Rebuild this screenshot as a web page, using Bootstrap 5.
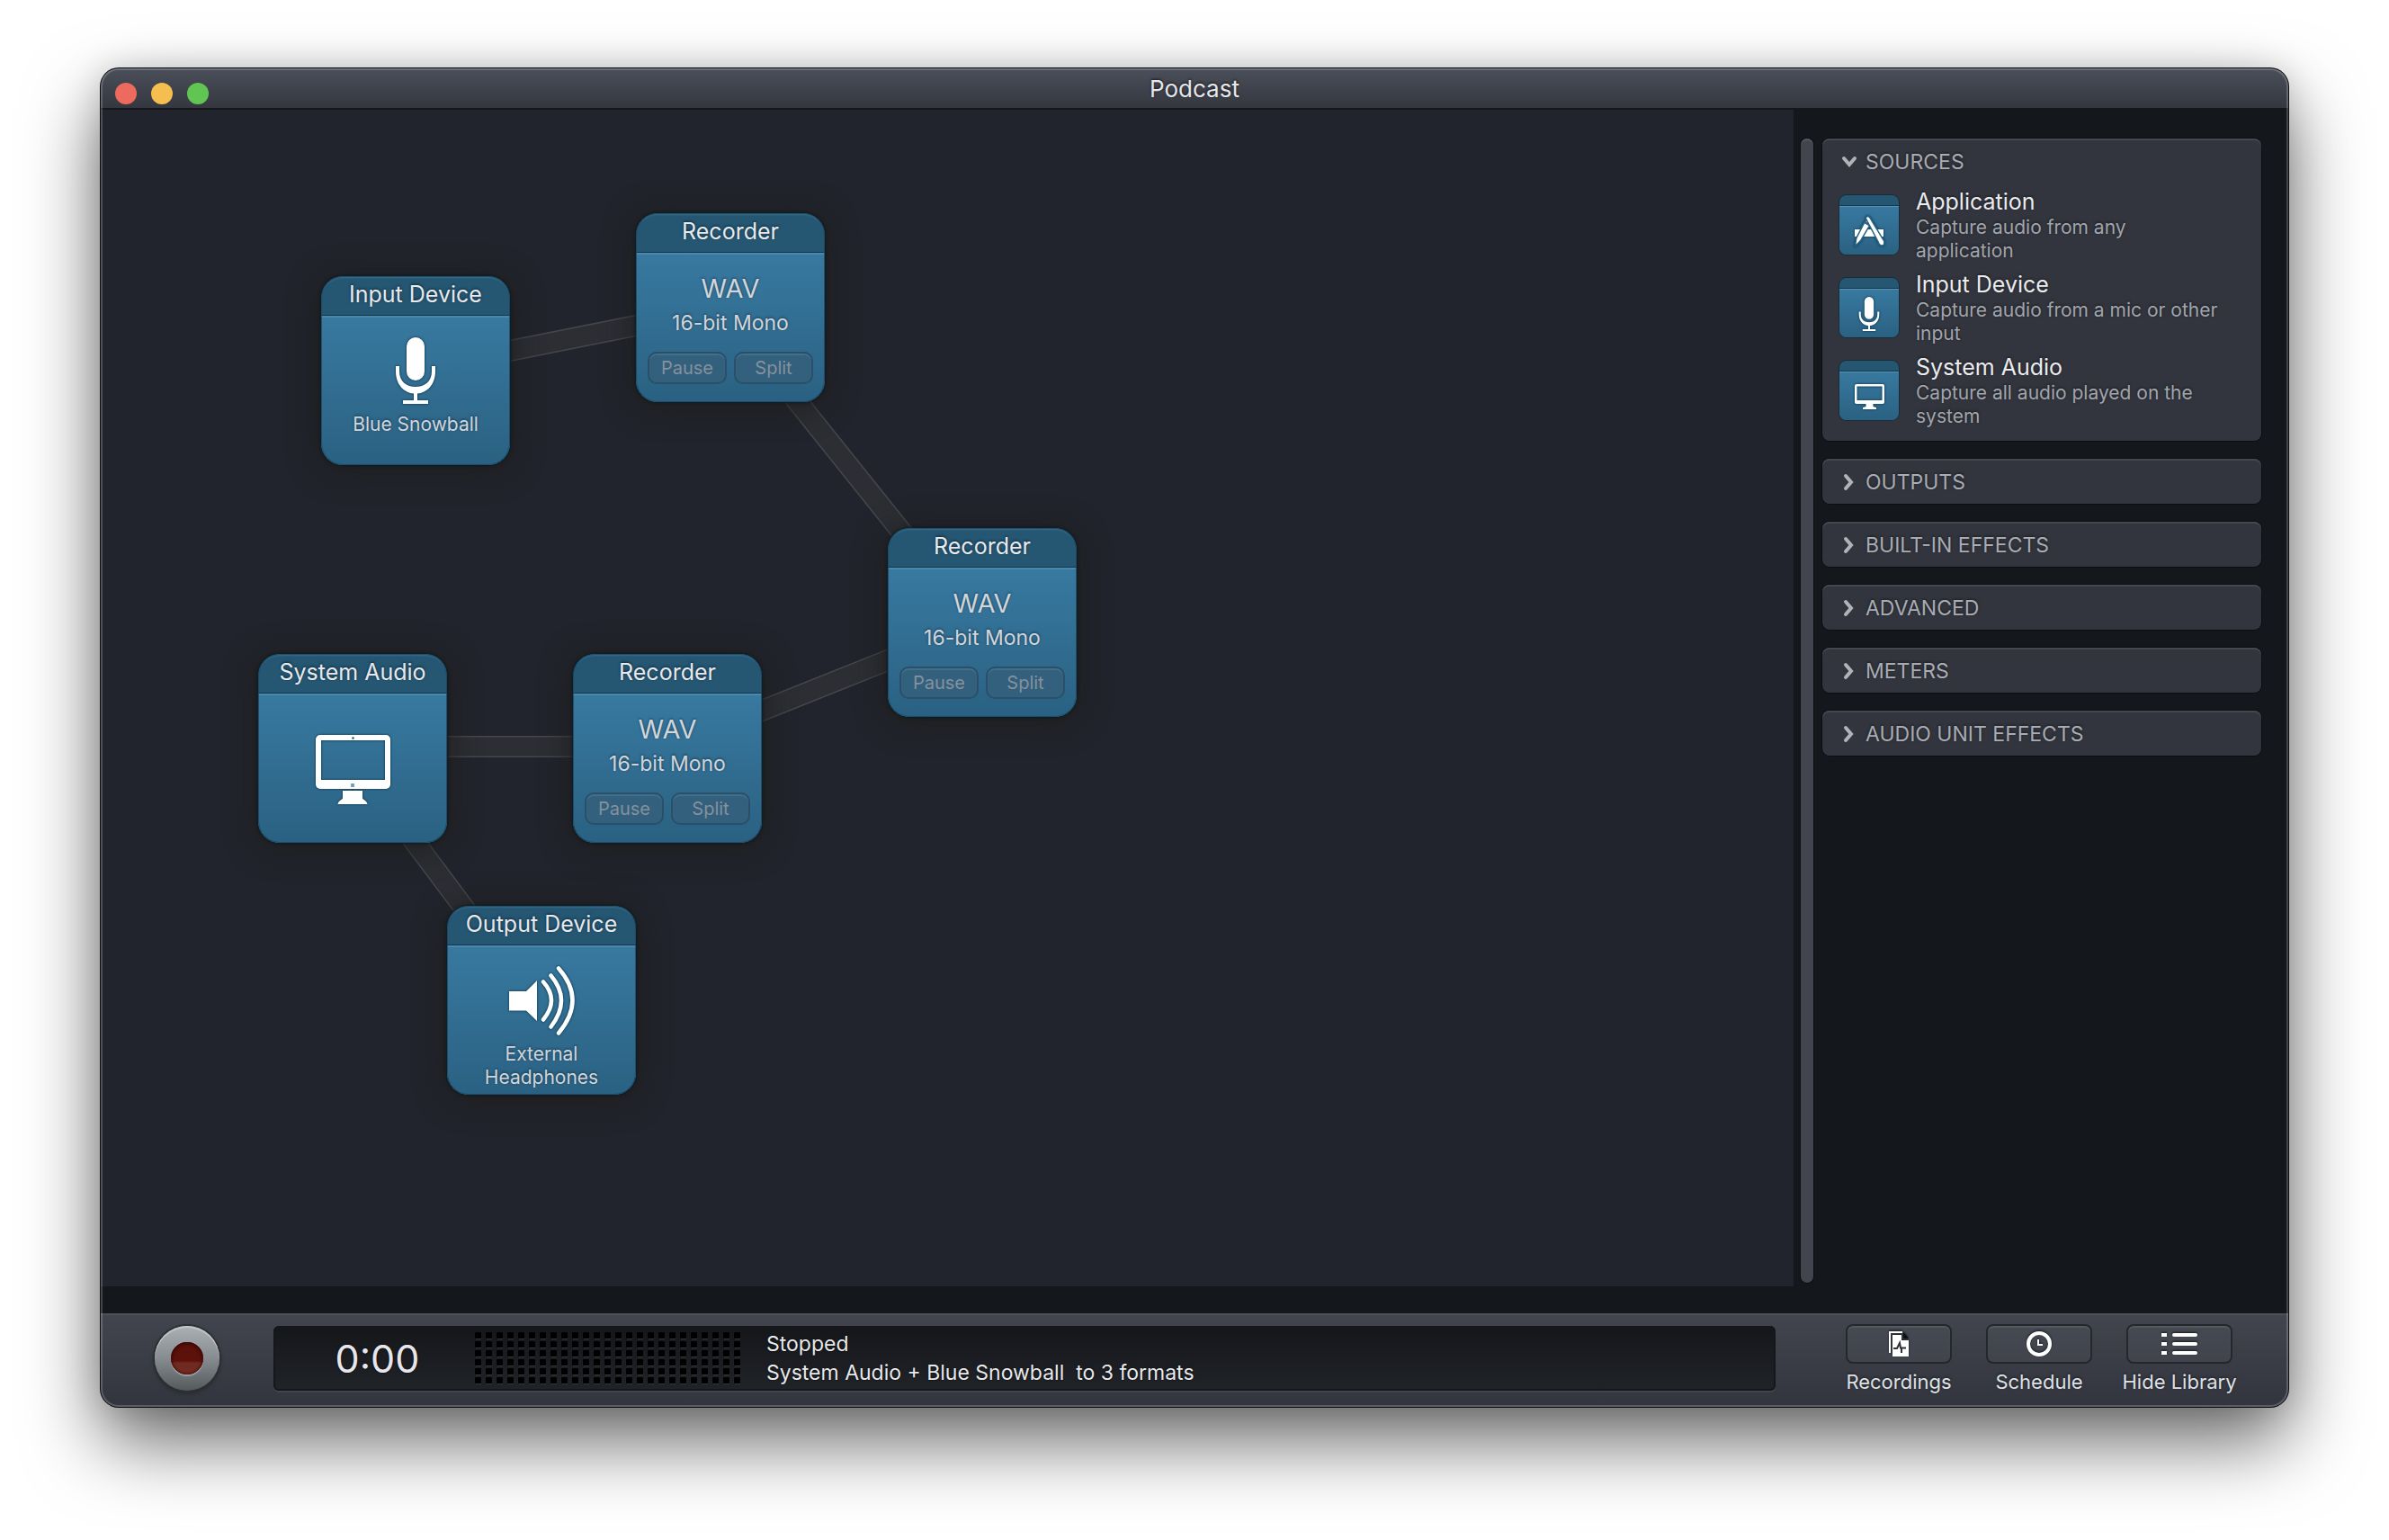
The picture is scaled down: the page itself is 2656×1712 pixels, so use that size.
<!DOCTYPE html>
<html lang="en">
<head>
<meta charset="utf-8">
<meta name="viewport" content="width=device-width, initial-scale=1">
<title>Podcast</title>
<link href="https://cdn.jsdelivr.net/npm/bootstrap@5.3.0/dist/css/bootstrap.min.css" rel="stylesheet">
<style>
  body { background: #fff; font-family: Inter, "Liberation Sans", sans-serif; padding: 76px 112px 148px; color: #e6e7ea; }
  h1, h2, h3, p { margin: 0; font-weight: 400; }
  svg { display: block; flex: none; }

  .app-window { border-radius: 20px; overflow: hidden; background: #14171b; position: relative;
    box-shadow: 0 0 0 1px #0b0d0f, 0 38px 84px rgba(0,0,0,.6), 0 0 36px rgba(0,0,0,.14); }
  .app-window::after { content: ""; position: absolute; inset: 0; border-radius: 20px; pointer-events: none;
    box-shadow: inset 0 0 0 2px rgba(255,255,255,.2); }

  .titlebar { height: 46px; background: linear-gradient(#4b4f59, #343740); border-bottom: 2px solid #15171b; position: relative; }
  .titlebar h1 { font-size: 26px; line-height: 46px; text-shadow: 0 -1px 3px rgba(0,0,0,.7); }
  .lights { position: absolute; left: 16px; top: 16px; gap: 16px; }
  .light-dot { width: 24px; height: 24px; border: 0; padding: 0; border-radius: 50%; }
  .dot-close { background: #ed6a5e; } .dot-min { background: #f5bf4f; } .dot-zoom { background: #61c554; }

  .board { background: #21242c; position: relative; margin-bottom: 30px; overflow: hidden; }
  .wires { position: absolute; left: 0; top: 0; width: 100%; height: 100%; }
  .wire-edge { stroke: #45474b; stroke-width: 24; }
  .wire-core { stroke: #2c2e34; stroke-width: 21; }

  .node { position: absolute; width: 210px; height: 210px; border-radius: 24px; overflow: hidden;
    background: #255773; text-align: center; box-shadow: 0 0 3px 1px #14181c, 0 4px 30px 6px rgba(30,30,28,.75); }
  .node::after { content: ""; position: absolute; inset: 0; border-radius: 24px; pointer-events: none;
    box-shadow: inset 0 0 0 1px rgba(15,70,100,.7), inset 0 3px 2px -1px rgba(90,150,185,.35); }
  .node-title { height: 44px; line-height: 41px; font-size: 25px; color: #e8e9ec; border-bottom: 1px solid #163649; text-shadow: 0 -1px 3px rgba(0,20,35,.7); }
  .node-main { height: 166px; background: linear-gradient(#3879a0, #2a6182); border-top: 2px solid #4a87ad; color: #d2d5d9; text-shadow: 0 -1px 3px rgba(0,30,50,.6); }
  .node-art { height: 86px; margin-bottom: 4px; }
  .node-text { font-size: 21px; line-height: 26px; }
  .node-depth { font-size: 23px; line-height: 24px; margin-bottom: 2px; }
  .node-format { font-size: 29px; line-height: 36px; }
  .node-btn { width: 88px; height: 36px; border: 2px solid #2a4f68; border-radius: 10px; padding: 0; font-size: 20px; line-height: 30px;
    color: #85919d; background: #32607d; box-shadow: inset 0 2px 1px rgba(110,150,175,.3); text-shadow: none; }
  .glyph { filter: drop-shadow(0 0 1px #17465f) drop-shadow(0 0 1px #1d506b); fill: #fff; overflow: visible; }
  #node-input { left: 245px; top: 185px; }
  #node-rec-a { left: 595px; top: 115px; }
  #node-rec-b { left: 875px; top: 465px; }
  #node-system { left: 175px; top: 605px; }
  #node-rec-c { left: 525px; top: 605px; }
  #node-output { left: 385px; top: 885px; }

  .library { width: 550px; flex: none; padding: 32px 30px 34px 8px; gap: 10px; }
  .lib-scroll { width: 14px; flex: none; border-radius: 7px; background: #42454e; box-shadow: 0 0 0 1px #0d0f12, inset 0 3px 2px -1px #565a60; }
  .lib-list { gap: 20px; }
  .lib-group { background: #32353d; border-radius: 8px; box-shadow: 0 0 0 1px #0c0e11, inset 0 2px 0 #45484c; }
  .lib-head { height: 50px; width: 100%; border: 0; background: none; padding: 2px 22px 0; gap: 10px; font-size: 23px; color: #a9acb4; text-shadow: 0 -1px 3px rgba(0,0,0,.5); }
  .chevron { width: 16px; height: 18px; fill: none; stroke: #b0b3ba; stroke-width: 4; stroke-linecap: round; overflow: visible; }
  .lib-items { padding: 4px 40px 14px 19px; gap: 8px; }
  .lib-item { gap: 19px; }
  .tile { width: 66px; height: 66px; margin-top: 9px; flex: none; border-radius: 8px; overflow: hidden; background: #255773; padding-top: 12px; box-shadow: 0 0 0 1px #1a2b37; }
  .tile-main { height: 54px; background: linear-gradient(#3879a0, #2a6182); border-top: 1px solid #5592b6; box-shadow: 0 -1px 0 #163649; }
  .lib-name { font-size: 25px; line-height: 32px; color: #ebecef; text-shadow: 0 -1px 3px rgba(0,0,0,.5); }
  .lib-desc { font-size: 21px; line-height: 26px; color: #a2a5ad; text-shadow: 0 -1px 3px rgba(0,0,0,.5); }

  .transport { height: 104px; background: linear-gradient(#42454e, #32353e); border-top: 2px solid #4d515b; padding: 10px 43px 0 60px; }
  .rec-btn { width: 72px; height: 72px; margin-top: 2px; flex: none; border: 0; border-radius: 50%; background: linear-gradient(#abb0b4, #878c90 50%, #54595c); box-shadow: 0 0 0 2px #2c3035, 0 2px 4px 1px #24272c, inset 0 2px 1px #c4c8ca; }
  .rec-core { width: 36px; height: 36px; border-radius: 50%; background: linear-gradient(#5c110b 58%, #6f2a20 64%, #722b20); box-shadow: inset 0 2px 4px #3a0704, inset 0 0 3px #3a0704, 0 2px 1px rgba(200,205,208,.5); }
  .lcd { height: 72px; margin: 2px 59px 0 60px; border-radius: 6px; background: linear-gradient(#15161a, #202328); box-shadow: inset 0 0 0 2px #15181b, 0 2px 0 #42454d; text-shadow: 0 0 2px #000; }
  .lcd-time { font-size: 43px; line-height: 72px; width: 223px; padding-left: 8px; text-align: center; color: #e6e6ec; }
  .lcd-meter { margin-right: 23px; }
  .lcd-text { font-size: 23px; line-height: 32px; color: #e8e9ec; white-space: pre; }
  .tool { width: 156px; }
  .tool-btn { width: 118px; height: 44px; border: 2px solid #24272c; border-radius: 8px; background: linear-gradient(#454952, #41444d); padding: 0; box-shadow: inset 0 2px 1px #555a60; }
  .tool-label { font-size: 22px; line-height: 26px; margin-top: 7px; color: #dfe1e5; white-space: nowrap; text-shadow: 0 -1px 3px rgba(0,0,0,.5); cursor: pointer; }
  .tool-icon { fill: #fff; filter: drop-shadow(0 -1px 1px #16181c); overflow: visible; }
</style>
<script src="https://cdn.jsdelivr.net/npm/bootstrap@5.3.0/dist/js/bootstrap.bundle.min.js"></script>
</head>
<body class="d-flex flex-column min-vh-100">

<svg width="0" height="0" class="position-absolute" aria-hidden="true">
  <symbol id="g-mic" viewBox="0 0 44 74">
    <rect x="12" y="0" width="20" height="48" rx="10"/>
    <path d="M0 32h4v6c0 11 8 17 18 17s18-6 18-17v-6h4v6c0 15-10 24-20 24.500V70h12v4H8v-4h12v-7.500C10 62 0 53 0 38z"/>
  </symbol>
  <symbol id="g-mac" viewBox="0 0 83 77">
    <path fill-rule="evenodd" d="M5 0h73a5 5 0 0 1 5 5v50a5 5 0 0 1-5 5H5a5 5 0 0 1-5-5V5a5 5 0 0 1 5-5zM6 6v44h71V6z"/>
    <path d="M30 62h22v8c0 2 5 3 5.500 7h-33c.5-4 5.500-5 5.500-7z"/>
    <circle cx="41.500" cy="3.500" r="1.200" fill="#1d506b"/>
    <rect x="39" y="54" width="4" height="4" fill="#7ba3b8"/>
  </symbol>
</svg>

<div class="app-window d-flex flex-column flex-grow-1">
  <header class="titlebar">
    <div class="lights d-flex">
      <button class="light-dot dot-close" aria-label="Close"></button>
      <button class="light-dot dot-min" aria-label="Minimize"></button>
      <button class="light-dot dot-zoom" aria-label="Zoom"></button>
    </div>
    <h1 class="text-center">Podcast</h1>
  </header>

  <div class="d-flex flex-grow-1">
    <main class="board flex-grow-1">
      <svg class="wires" aria-hidden="true">
        <g class="wire-edge"><path d="M350 289L700 219M691 220L971 570M630 710L980 570M280 708H630M271 710L481 990"/></g>
        <g class="wire-core"><path d="M350 289L700 219M691 220L971 570M630 710L980 570M280 708H630M271 710L481 990"/></g>
      </svg>

      <section class="node" id="node-input">
        <h2 class="node-title">Input Device</h2>
        <div class="node-main pt-3">
          <div class="node-art d-flex align-items-center justify-content-center"><svg class="glyph" width="44" height="74"><use href="#g-mic"/></svg></div>
          <p class="node-text">Blue Snowball</p>
        </div>
      </section>

      <section class="node" id="node-rec-a">
        <h2 class="node-title">Recorder</h2>
        <div class="node-main">
          <p class="node-format mt-3 pt-1">WAV</p>
          <p class="node-depth mt-2">16-bit Mono</p>
          <div class="d-flex justify-content-center gap-2 mt-3 pt-1"><button class="node-btn">Pause</button><button class="node-btn">Split</button></div>
        </div>
      </section>

      <section class="node" id="node-rec-b">
        <h2 class="node-title">Recorder</h2>
        <div class="node-main">
          <p class="node-format mt-3 pt-1">WAV</p>
          <p class="node-depth mt-2">16-bit Mono</p>
          <div class="d-flex justify-content-center gap-2 mt-3 pt-1"><button class="node-btn">Pause</button><button class="node-btn">Split</button></div>
        </div>
      </section>

      <section class="node" id="node-system">
        <h2 class="node-title">System Audio</h2>
        <div class="node-main d-flex align-items-center justify-content-center"><svg class="glyph" width="83" height="77"><use href="#g-mac"/></svg></div>
      </section>

      <section class="node" id="node-rec-c">
        <h2 class="node-title">Recorder</h2>
        <div class="node-main">
          <p class="node-format mt-3 pt-1">WAV</p>
          <p class="node-depth mt-2">16-bit Mono</p>
          <div class="d-flex justify-content-center gap-2 mt-3 pt-1"><button class="node-btn">Pause</button><button class="node-btn">Split</button></div>
        </div>
      </section>

      <section class="node" id="node-output">
        <h2 class="node-title">Output Device</h2>
        <div class="node-main pt-3">
          <div class="node-art d-flex align-items-center justify-content-center">
            <svg class="glyph" width="73" height="77" viewBox="0 0 73 77">
              <path d="M0 28h19L31 16v45L19 49.500H0z"/>
              <path d="M38 17.500q18 20 0 42M46.500 10.500q23 27 0 57M55 2.500q31 35 0 72" fill="none" stroke="#fff" stroke-width="4.500" stroke-linecap="round"/>
            </svg>
          </div>
          <p class="node-text">External<br>Headphones</p>
        </div>
      </section>
    </main>

    <aside class="library d-flex">
      <div class="lib-scroll"></div>
      <div class="lib-list d-flex flex-column flex-grow-1">
        <section class="lib-group">
          <button class="lib-head d-flex align-items-center" aria-expanded="true"><svg class="chevron" viewBox="0 0 16 18"><path d="M2 5l6 7 6-7"/></svg>SOURCES</button>
          <div class="lib-items d-flex flex-column">
            <article class="lib-item d-flex">
              <div class="tile"><div class="tile-main d-flex align-items-center justify-content-center">
                <svg class="glyph" width="34" height="32" viewBox="0 0 34 32">
                  <path d="M1 14h32v8H1z"/>
                  <g stroke="#2a6485" stroke-width="3" paint-order="stroke">
                    <path d="M12 7.500l4.500 2.500L7 26l-4.500 4.500L3.500 24zM13.500 5.500L15 4l3.500 2-.5 2z"/>
                    <path d="M14 1.500Q15-.5 17 1l14.500 24c2 2 2 4 1 6-2.500.5-4-.5-4.500-3z"/>
                  </g>
                </svg></div></div>
              <div><h3 class="lib-name">Application</h3><p class="lib-desc">Capture audio from any application</p></div>
            </article>
            <article class="lib-item d-flex">
              <div class="tile"><div class="tile-main d-flex align-items-center justify-content-center"><svg class="glyph" width="24" height="38"><use href="#g-mic"/></svg></div></div>
              <div><h3 class="lib-name">Input Device</h3><p class="lib-desc">Capture audio from a mic or other input</p></div>
            </article>
            <article class="lib-item d-flex">
              <div class="tile"><div class="tile-main d-flex align-items-center justify-content-center">
                <svg class="glyph" width="33" height="28" viewBox="0 0 33 28">
                  <path fill-rule="evenodd" d="M2 0h29a2 2 0 0 1 2 2v18a2 2 0 0 1-2 2H2a2 2 0 0 1-2-2V2a2 2 0 0 1 2-2zM2.500 2.500v15.500h28V2.500z"/>
                  <path d="M12.500 22h8v3l3.500 1v2H9v-2l3.500-1z"/>
                </svg></div></div>
              <div><h3 class="lib-name">System Audio</h3><p class="lib-desc">Capture all audio played on the system</p></div>
            </article>
          </div>
        </section>
        <section class="lib-group"><button class="lib-head d-flex align-items-center" aria-expanded="false"><svg class="chevron" viewBox="0 0 16 18"><path d="M4 2l6 7-6 7"/></svg>OUTPUTS</button></section>
        <section class="lib-group"><button class="lib-head d-flex align-items-center" aria-expanded="false"><svg class="chevron" viewBox="0 0 16 18"><path d="M4 2l6 7-6 7"/></svg>BUILT-IN EFFECTS</button></section>
        <section class="lib-group"><button class="lib-head d-flex align-items-center" aria-expanded="false"><svg class="chevron" viewBox="0 0 16 18"><path d="M4 2l6 7-6 7"/></svg>ADVANCED</button></section>
        <section class="lib-group"><button class="lib-head d-flex align-items-center" aria-expanded="false"><svg class="chevron" viewBox="0 0 16 18"><path d="M4 2l6 7-6 7"/></svg>METERS</button></section>
        <section class="lib-group"><button class="lib-head d-flex align-items-center" aria-expanded="false"><svg class="chevron" viewBox="0 0 16 18"><path d="M4 2l6 7-6 7"/></svg>AUDIO UNIT EFFECTS</button></section>
      </div>
    </aside>
  </div>

  <footer class="transport d-flex align-items-start">
    <button class="rec-btn d-flex align-items-center justify-content-center" aria-label="Record"><span class="rec-core"></span></button>
    <div class="lcd d-flex align-items-center flex-grow-1">
      <div class="lcd-time">0:00</div>
      <svg class="lcd-meter" width="302" height="60" aria-hidden="true">
        <defs><pattern id="led" width="12" height="10" patternUnits="userSpaceOnUse"><rect x="1" y="1" width="7" height="7" rx="1" fill="#000"/><rect x="2" y="8" width="6" height="1" fill="#34363c"/></pattern></defs>
        <rect width="300" height="60" fill="url(#led)"/>
      </svg>
      <div class="lcd-text"><div>Stopped</div><div>System Audio + Blue Snowball  to 3 formats</div></div>
    </div>
    <div class="d-flex">
      <div class="tool d-flex flex-column align-items-center">
        <button class="tool-btn d-flex align-items-center justify-content-center" id="t-rec">
          <svg class="tool-icon" width="22" height="28" viewBox="0 0 22 28"><path d="M0 0h15v2H2v22H0z"/><path d="M4 4h10v6h8v18H4z"/><path d="M16 1l6 7h-6z" fill="#0d0f12"/><path d="M5 19h4l3-6 1 5.500h6M14 18v6" fill="none" stroke="#2f3239" stroke-width="2"/></svg>
        </button>
        <label class="tool-label" for="t-rec">Recordings</label>
      </div>
      <div class="tool d-flex flex-column align-items-center">
        <button class="tool-btn d-flex align-items-center justify-content-center" id="t-sched">
          <svg class="tool-icon" width="28" height="28" viewBox="0 0 28 28"><circle cx="14" cy="14" r="12" fill="none" stroke="#fff" stroke-width="4"/><path d="M12 9h2v5h4v2h-6z"/></svg>
        </button>
        <label class="tool-label" for="t-sched">Schedule</label>
      </div>
      <div class="tool d-flex flex-column align-items-center">
        <button class="tool-btn d-flex align-items-center justify-content-center" id="t-lib">
          <svg class="tool-icon" width="40" height="24" viewBox="0 0 40 24"><path d="M0 0h6v4H0zM0 10h6v4H0zM0 20h6v4H0z"/><rect x="12" width="28" height="4" rx="2"/><rect x="12" y="10" width="28" height="4" rx="2"/><rect x="12" y="20" width="28" height="4" rx="2"/></svg>
        </button>
        <label class="tool-label" for="t-lib">Hide Library</label>
      </div>
    </div>
  </footer>
</div>
</body>
</html>
